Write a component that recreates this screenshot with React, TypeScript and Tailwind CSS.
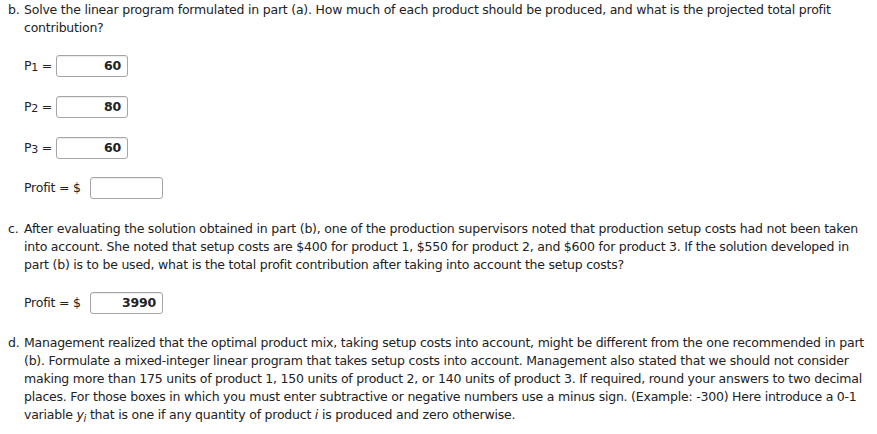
import React from "react";

const Box: React.FC<{ value?: string; className?: string }> = ({ value, className }) => (
  <div
    className={`h-[22px] rounded-[3px] border border-[#a6a6a6] bg-white px-[6px] text-right text-[12.5px] font-bold leading-[20px] text-[#222] shadow-[inset_0_1px_1px_rgba(0,0,0,0.08)] ${className ?? ""}`}
  >
    {value}
  </div>
);

const VarRow: React.FC<{ n: string; value: string; className?: string }> = ({ n, value, className }) => (
  <div className={`flex h-[22px] items-center pl-[16px] ${className ?? ""}`}>
    <span className="w-[32px] whitespace-nowrap">
      P<sub className="relative top-[1px] align-baseline text-[11px] leading-none">{n}</sub> =
    </span>
    <Box value={value} className="w-[72px]" />
  </div>
);

const ProfitRow: React.FC<{ value?: string; className?: string }> = ({ value, className }) => (
  <div className={`flex h-[22px] items-center pl-[16px] ${className ?? ""}`}>
    <span className="w-[66px] whitespace-nowrap">Profit = $</span>
    <Box value={value} className="w-[73px]" />
  </div>
);

const Part: React.FC<{ letter: string; children: React.ReactNode; className?: string }> = ({ letter, children, className }) => (
  <div className={`flex ${className ?? ""}`}>
    <span className="w-[16px] shrink-0">{letter}</span>
    <p className="whitespace-nowrap">{children}</p>
  </div>
);

export default function App() {
  return (
    <div className="min-h-[434px] bg-white px-[8px] pt-[1px] font-['DejaVu_Sans',Verdana,sans-serif] text-[12.5px] leading-[18px] tracking-[-0.22px] text-[#222]">
      <Part letter="b.">
        Solve the linear program formulated in part (a). How much of each product should be produced, and what is the projected total profit
        <br />
        contribution?
      </Part>

      <VarRow n="1" value="60" className="mt-[18px]" />
      <VarRow n="2" value="80" className="mt-[19px]" />
      <VarRow n="3" value="60" className="mt-[19px]" />
      <ProfitRow className="mt-[18px]" />

      <Part letter="c." className="mt-[21px]">
        After evaluating the solution obtained in part (b), one of the production supervisors noted that production setup costs had not been taken
        <br />
        into account. She noted that setup costs are $400 for product 1, $550 for product 2, and $600 for product 3. If the solution developed in
        <br />
        part (b) is to be used, what is the total profit contribution after taking into account the setup costs?
      </Part>

      <ProfitRow value="3990" className="mt-[18px]" />

      <Part letter="d." className="mt-[20px]">
        Management realized that the optimal product mix, taking setup costs into account, might be different from the one recommended in part
        <br />
        (b). Formulate a mixed-integer linear program that takes setup costs into account. Management also stated that we should not consider
        <br />
        making more than 175 units of product 1, 150 units of product 2, or 140 units of product 3. If required, round your answers to two decimal
        <br />
        places. For those boxes in which you must enter subtractive or negative numbers use a minus sign. (Example: -300) Here introduce a 0-1
        <br />
        variable <i>y<sub className="text-[10px] leading-none">i</sub></i> that is one if any quantity of product <i>i</i> is produced and zero otherwise.
      </Part>
    </div>
  );
}
